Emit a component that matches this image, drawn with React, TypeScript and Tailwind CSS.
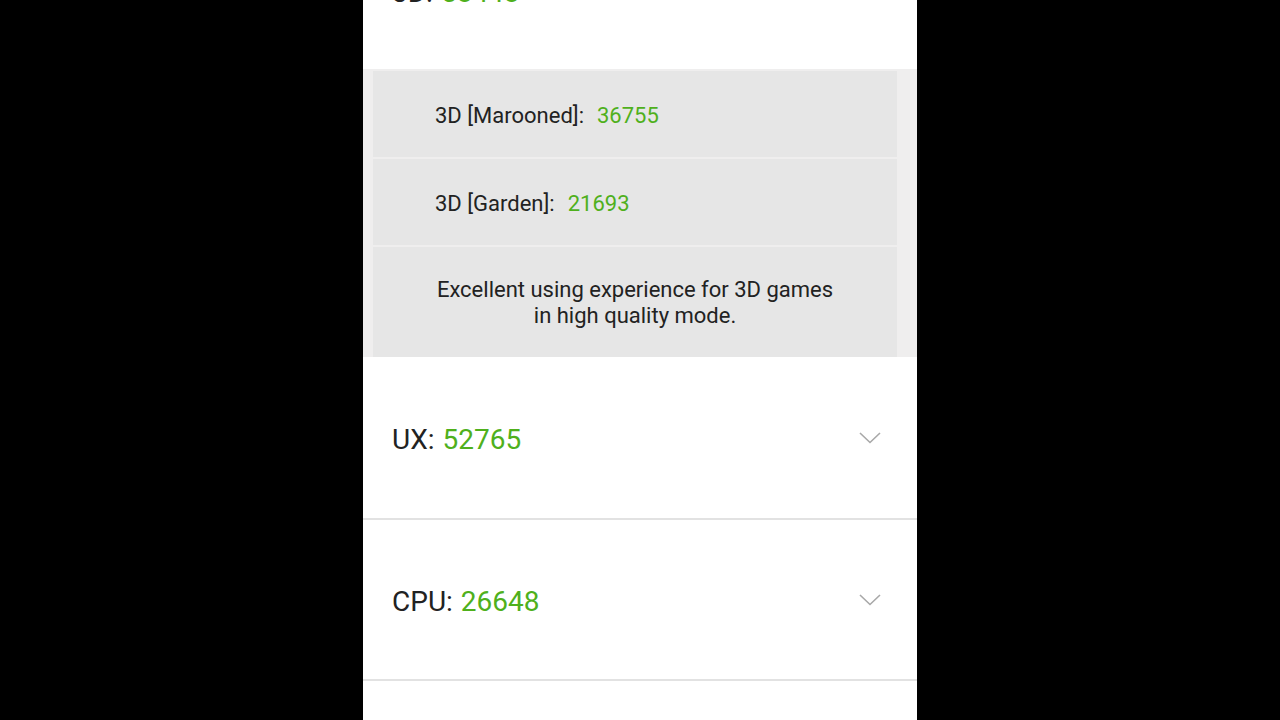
import React from "react";

function Chevron() {
  return (
    <svg width="22" height="12" viewBox="0 0 22 12" fill="none" className="mr-[36px]">
      <path d="M1 1 L11 10.5 L21 1" stroke="#a8a8a8" strokeWidth="1.6" />
    </svg>
  );
}

function ScoreRow({ label, value, h }: { label: string; value: string; h: string }) {
  return (
    <div className={`flex items-center justify-between bg-white pl-[29px] ${h}`}>
      <div className="text-[28px] leading-none text-[#222222] pt-[5px]">
        {label}:<span className="ml-[8px] text-[#4fb01c]">{value}</span>
      </div>
      <Chevron />
    </div>
  );
}

export default function App() {
  return (
    <div
      className="w-full h-[720px] bg-black overflow-hidden flex justify-center"
      style={{ fontFamily: "Roboto, 'Noto Sans', sans-serif" }}
    >
      <div className="w-[554px] h-full bg-white flex flex-col">
        <div className="h-[69px] overflow-hidden shrink-0">
          <div className="h-[160px] -mt-[87px] flex items-center pl-[29px] text-[28px] leading-none text-[#222222]">
            3D:<span className="ml-[8px] text-[#4fb01c]">58448</span>
          </div>
        </div>
        <div className="bg-[#efeeee] pl-[10px] pr-[20px] pt-[2px] flex flex-col gap-[2px] shrink-0">
          <div className="bg-[#e6e6e6] h-[86px] flex items-center pl-[62px] pt-[2px] text-[22px] text-[#222222]">
            3D [Marooned]:<span className="ml-[13px] text-[#4fb01c]">36755</span>
          </div>
          <div className="bg-[#e6e6e6] h-[86px] flex items-center pl-[62px] pt-[2px] text-[22px] text-[#222222]">
            3D [Garden]:<span className="ml-[13px] text-[#4fb01c]">21693</span>
          </div>
          <div className="bg-[#e6e6e6] h-[110px] flex flex-col items-center justify-center text-[22px] leading-[26px] text-[#222222] text-center pt-[2px]">
            <div>Excellent using experience for 3D games</div>
            <div>in high quality mode.</div>
          </div>
        </div>
        <ScoreRow label="UX" value="52765" h="h-[161px]" />
        <div className="h-[2px] bg-[#e2e2e2] shrink-0" />
        <ScoreRow label="CPU" value="26648" h="h-[159px]" />
        <div className="h-[2px] bg-[#e2e2e2] shrink-0" />
        <div className="flex-1 bg-white" />
      </div>
    </div>
  );
}
